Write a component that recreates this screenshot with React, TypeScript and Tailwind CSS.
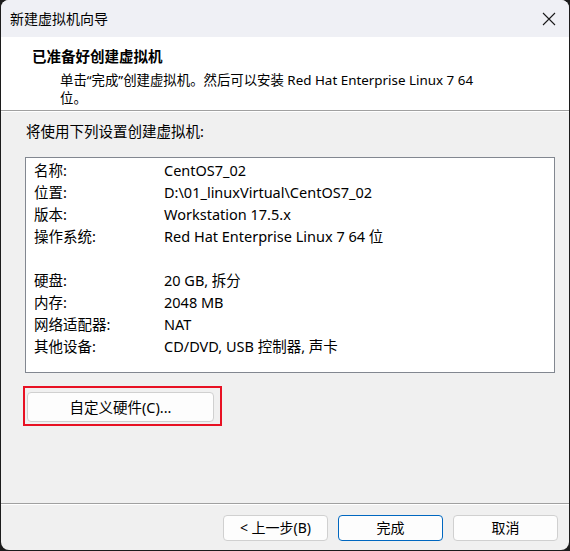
import React from 'react';

const font = "font-['Segoe_UI','Noto_Sans','Noto_Sans_CJK_SC',sans-serif]";

const rows: [string, string][] = [
  ['名称:', 'CentOS7_02'],
  ['位置:', 'D:\\01_linuxVirtual\\CentOS7_02'],
  ['版本:', 'Workstation 17.5.x'],
  ['操作系统:', 'Red Hat Enterprise Linux 7 64 位'],
  ['', ''],
  ['硬盘:', '20 GB, 拆分'],
  ['内存:', '2048 MB'],
  ['网络适配器:', 'NAT'],
  ['其他设备:', 'CD/DVD, USB 控制器, 声卡'],
];

function DialogButton({ label, primary }: { label: string; primary?: boolean }) {
  return (
    <button
      className={
        'h-[26px] w-[105px] rounded-[4px] bg-[#fdfdfd] text-[14px] leading-none text-black ' +
        (primary ? 'border border-[#0067c0]' : 'border border-[#d0d0d0]')
      }
    >
      {label}
    </button>
  );
}

export default function App() {
  return (
    <div className={`h-[551px] w-[570px] bg-[#1c1c1c] px-px pb-px ${font}`}>
      <div className="flex h-full flex-col overflow-hidden rounded-[8px] bg-[#f0f0f0] text-black">
        {/* title bar */}
        <div className="flex h-[37px] items-center justify-between bg-[#eff0f5] pl-[9px] pr-[13px]">
          <span className="text-[14px]">新建虚拟机向导</span>
          <svg width="14" height="14" viewBox="0 0 14 14" className="text-[#1a1a1a]">
            <path d="M1 1 L13 13 M13 1 L1 13" stroke="currentColor" strokeWidth="1.1" />
          </svg>
        </div>

        {/* header */}
        <div className="h-[73px] bg-white pl-[31px] pt-[9px]">
          <div className="text-[14.5px] font-bold leading-[20px]">已准备好创建虚拟机</div>
          <div className="mt-[5px] pl-[28px] text-[13.4px] leading-[18px]">
            <div>单击“完成”创建虚拟机。然后可以安装 Red Hat Enterprise Linux 7 64</div>
            <div>位。</div>
          </div>
        </div>
        <div className="h-px bg-[#a0a0a0]" />
        <div className="h-px bg-white" />

        {/* body */}
        <div className="pl-[25px] pt-[9px] text-[14.5px] leading-[20px]">将使用下列设置创建虚拟机:</div>

        <div className="ml-[24px] mt-[16px] h-[216px] w-[530px] border border-[#828790] bg-white pl-[8px] pt-[2px]">
          {rows.map(([k, v], i) => (
            <div key={i} className="flex h-[22px] items-center text-[14.5px]">
              <span className="w-[130px] shrink-0">{k}</span>
              <span>{v}</span>
            </div>
          ))}
        </div>

        <div className="ml-[22px] mt-[13px] h-[40px] w-[199px] border-2 border-[#e81123] pl-[2px] pt-[4px]">
          <button className="h-[30px] w-[187px] rounded-[4px] border border-[#d0d0d0] bg-[#fdfdfd] text-[14.5px] leading-none">
            自定义硬件(C)...
          </button>
        </div>

        <div className="flex-1" />

        {/* footer */}
        <div className="h-px bg-[#a0a0a0]" />
        <div className="h-px bg-white" />
        <div className="flex h-[45px] justify-end gap-[10px] pr-[11px] pt-[10px]">
          <DialogButton label="< 上一步(B)" />
          <DialogButton label="完成" primary />
          <DialogButton label="取消" />
        </div>
      </div>
    </div>
  );
}
